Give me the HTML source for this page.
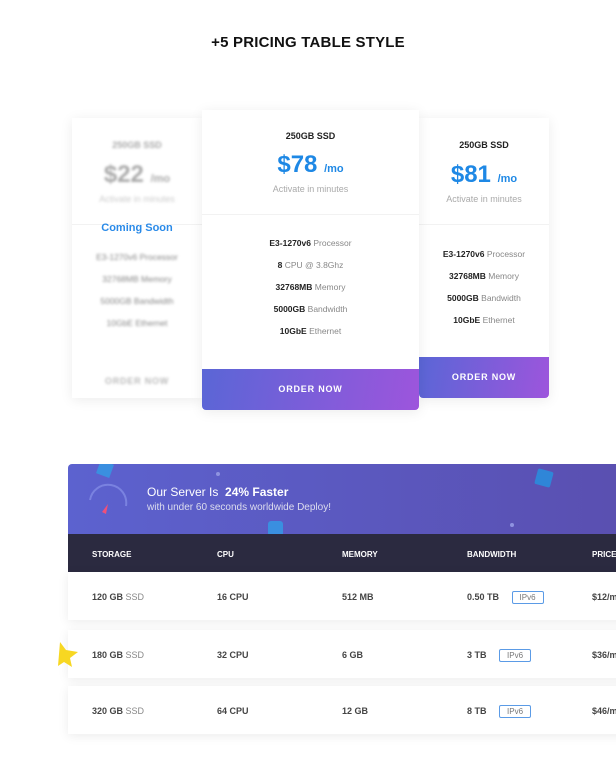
<!DOCTYPE html>
<html><head><style>
*{margin:0;padding:0;box-sizing:border-box}
body{width:616px;height:766px;background:#fff;font-family:"Liberation Sans",sans-serif;position:relative;overflow:hidden;color:#333}
.abs{position:absolute}
h1{position:absolute;top:34px;left:0;width:616px;text-align:center;font-size:15px;font-weight:bold;color:#111;letter-spacing:.2px}
.card{position:absolute;background:#fff;box-shadow:0 2px 12px rgba(0,0,0,.08);text-align:center}
.t{font-size:9px;font-weight:bold;color:#222}
.price{font-size:24px;font-weight:bold;color:#1e88e5;line-height:30px}
.price small{font-size:11px}
.act{font-size:9px;color:#aaa}
.f{font-size:8.5px;color:#888;height:22px;line-height:22px}
.f b{color:#222}
.btn{position:absolute;left:0;right:0;bottom:0;background:linear-gradient(100deg,#5a66d6,#9d55dc);color:#fff;font-size:9px;font-weight:bold;letter-spacing:.8px;border-radius:0 0 4px 4px}
.blur{filter:blur(1.2px);color:#bbb}
.row{position:absolute;left:68px;width:560px;height:48px;background:#fff;box-shadow:0 2px 10px rgba(0,0,0,.08);font-size:9px;font-weight:bold;color:#444}
.row span{position:absolute;top:19px;line-height:12px}
.ip{display:inline-block;border:1px solid #5b9be6;color:#777;font-weight:normal;padding:0 7px;border-radius:2px;font-size:8px;margin-left:10px;line-height:11px;font-style:normal;vertical-align:top}
.hd span{position:absolute;top:16px;font-size:8px;color:#fff;font-weight:bold}
</style></head><body>
<h1>+5 PRICING TABLE STYLE</h1>

<div class="card" style="left:72px;top:118px;width:130px;height:280px">
 <div class="blur">
 <div class="t" style="margin-top:22px;color:#aaa">250GB SSD</div>
 <div class="price" style="color:#aaa;margin-top:10px">$22 <small>/mo</small></div>
 <div class="act" style="color:#ccc">Activate in minutes</div>
 </div>
 <div style="border-top:1px solid #f2f2f2;margin-top:20px"></div>
 <div style="font-size:11px;font-weight:bold;color:#2a8ae8;margin-top:-3px">Coming Soon</div>
 <div class="blur" style="margin-top:12px">
 <div class="f">E3-1270v6 Processor</div><div class="f">32768MB Memory</div><div class="f">5000GB Bandwidth</div><div class="f">10GbE Ethernet</div>
 <div style="font-size:9px;font-weight:bold;margin-top:42px;letter-spacing:.8px">ORDER NOW</div>
 </div>
</div>

<div class="card" style="left:202px;top:110px;width:217px;height:300px;z-index:2">
 <div class="t" style="margin-top:21px">250GB SSD</div>
 <div class="price" style="margin-top:9px">$78 <small>/mo</small></div>
 <div class="act">Activate in minutes</div>
 <div style="border-top:1px solid #f2f2f2;margin-top:20px"></div>
 <div style="margin-top:17px">
 <div class="f"><b>E3-1270v6</b> Processor</div><div class="f"><b>8</b> CPU @ 3.8Ghz</div><div class="f"><b>32768MB</b> Memory</div><div class="f"><b>5000GB</b> Bandwidth</div><div class="f"><b>10GbE</b> Ethernet</div>
 </div>
 <div class="btn" style="height:41px;line-height:41px">ORDER NOW</div>
</div>

<div class="card" style="left:419px;top:118px;width:130px;height:280px">
 <div class="t" style="margin-top:22px">250GB SSD</div>
 <div class="price" style="margin-top:10px">$81 <small>/mo</small></div>
 <div class="act">Activate in minutes</div>
 <div style="border-top:1px solid #f2f2f2;margin-top:20px"></div>
 <div style="margin-top:18px">
 <div class="f"><b>E3-1270v6</b> Processor</div><div class="f"><b>32768MB</b> Memory</div><div class="f"><b>5000GB</b> Bandwidth</div><div class="f"><b>10GbE</b> Ethernet</div>
 </div>
 <div class="btn" style="height:41px;line-height:41px">ORDER NOW</div>
</div>

<div class="abs" style="left:68px;top:464px;width:560px;height:70px;background:linear-gradient(90deg,#5c62cf,#5a4fb0);border-radius:4px 0 0 0;overflow:hidden">
 <svg class="abs" style="left:14px;top:14px" width="50" height="50"><path d="M8 22 A18 18 0 0 1 44 28" fill="none" stroke="#7a82e0" stroke-width="2"/><path d="M20 34 L26 26 L24 36 Z" fill="#f0507a"/></svg>
 <div class="abs" style="left:30px;top:-2px;width:14px;height:14px;background:#3a8fe0;transform:rotate(20deg)"></div>
 <div class="abs" style="left:200px;top:57px;width:15px;height:15px;background:#3a8fe0;border-radius:3px"></div>
 <div class="abs" style="left:468px;top:6px;width:16px;height:16px;background:#2f86d8;transform:rotate(15deg);border-radius:2px"></div>
 <div class="abs" style="left:148px;top:8px;width:4px;height:4px;background:#8f93e0;border-radius:50%"></div>
 <div class="abs" style="left:442px;top:59px;width:4px;height:4px;background:#8f93e0;border-radius:50%"></div>
 <div class="abs" style="left:79px;top:21px;color:#fff;font-size:12px">Our Server Is &nbsp;<b>24% Faster</b></div>
 <div class="abs" style="left:79px;top:38px;color:#dde;font-size:10px">with under 60 seconds worldwide Deploy!</div>
</div>
<div class="abs hd" style="left:68px;top:534px;width:560px;height:38px;background:#2b2a40">
 <span style="left:24px">STORAGE</span><span style="left:149px">CPU</span><span style="left:274px">MEMORY</span><span style="left:399px">BANDWIDTH</span><span style="left:524px">PRICE</span>
</div>
<div class="row" style="top:572px"><span style="left:24px">120 GB <i style="font-style:normal;font-weight:normal;color:#888">SSD</i></span><span style="left:149px">16 CPU</span><span style="left:274px">512 MB</span><span style="left:399px">0.50 TB <em class="ip">IPv6</em></span><span style="left:524px">$12/mo</span></div>
<div class="row" style="top:630px"><span style="left:24px">180 GB <i style="font-style:normal;font-weight:normal;color:#888">SSD</i></span><span style="left:149px">32 CPU</span><span style="left:274px">6 GB</span><span style="left:399px">3 TB <em class="ip">IPv6</em></span><span style="left:524px">$36/mo</span></div>
<div class="row" style="top:686px"><span style="left:24px">320 GB <i style="font-style:normal;font-weight:normal;color:#888">SSD</i></span><span style="left:149px">64 CPU</span><span style="left:274px">12 GB</span><span style="left:399px">8 TB <em class="ip">IPv6</em></span><span style="left:524px">$46/mo</span></div>
<svg class="abs" style="left:58px;top:640px" width="24" height="28"><path d="M2 2 L8 10 L20 12 L12 18 L14 27 L6 22 L0 26 Z" fill="#f7d722"/></svg>
</body></html>
